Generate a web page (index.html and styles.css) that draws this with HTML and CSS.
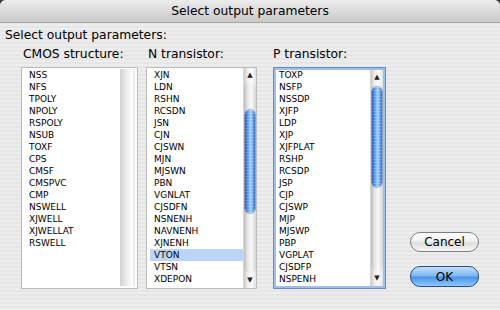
FILE: index.html
```html
<!DOCTYPE html>
<html lang="en">
<head>
  <meta charset="UTF-8">
  <meta name="viewport" content="width=device-width, initial-scale=1.0">
  <title>Select output parameters</title>
  <link rel="stylesheet" href="styles.css">
</head>
<body>
  <div class="window">
    <div class="titlebar">Select output parameters</div>
    <div class="content">
      <div class="prompt">Select output parameters:</div>
      <div class="panels">

        <div class="group group-cmos">
          <div class="group-label">CMOS structure:</div>
          <div class="listbox">
            <ul class="items">
              <li>NSS</li>
              <li>NFS</li>
              <li>TPOLY</li>
              <li>NPOLY</li>
              <li>RSPOLY</li>
              <li>NSUB</li>
              <li>TOXF</li>
              <li>CPS</li>
              <li>CMSF</li>
              <li>CMSPVC</li>
              <li>CMP</li>
              <li>NSWELL</li>
              <li>XJWELL</li>
              <li>XJWELLAT</li>
              <li>RSWELL</li>
            </ul>
            <div class="scroll-off"></div>
          </div>
        </div>

        <div class="group group-n">
          <div class="group-label">N transistor:</div>
          <div class="listbox">
            <ul class="items">
              <li>XJN</li>
              <li>LDN</li>
              <li>RSHN</li>
              <li>RCSDN</li>
              <li>JSN</li>
              <li>CJN</li>
              <li>CJSWN</li>
              <li>MJN</li>
              <li>MJSWN</li>
              <li>PBN</li>
              <li>VGNLAT</li>
              <li>CJSDFN</li>
              <li>NSNENH</li>
              <li>NAVNENH</li>
              <li>XJNENH</li>
              <li class="selected">VTON</li>
              <li>VTSN</li>
              <li>XDEPON</li>
            </ul>
            <div class="scroll">
              <div class="arrow">&#9650;</div>
              <div class="track"><div class="thumb thumb-n"></div></div>
              <div class="arrow">&#9660;</div>
            </div>
          </div>
        </div>

        <div class="group group-p">
          <div class="group-label">P transistor:</div>
          <div class="listbox listbox-focus">
            <ul class="items">
              <li>TOXP</li>
              <li>NSFP</li>
              <li>NSSDP</li>
              <li>XJFP</li>
              <li>LDP</li>
              <li>XJP</li>
              <li>XJFPLAT</li>
              <li>RSHP</li>
              <li>RCSDP</li>
              <li>JSP</li>
              <li>CJP</li>
              <li>CJSWP</li>
              <li>MJP</li>
              <li>MJSWP</li>
              <li>PBP</li>
              <li>VGPLAT</li>
              <li>CJSDFP</li>
              <li>NSPENH</li>
            </ul>
            <div class="scroll">
              <div class="arrow">&#9650;</div>
              <div class="track"><div class="thumb thumb-p"></div></div>
              <div class="arrow">&#9660;</div>
            </div>
          </div>
        </div>

        <div class="buttons">
          <button class="btn">Cancel</button>
          <button class="btn btn-default">OK</button>
        </div>

      </div>
    </div>
  </div>
</body>
</html>
```

FILE: styles.css
```css
html, body {
  margin: 0;
  padding: 0;
}
body {
  background-color: #3a3a3a;
  font-family: "DejaVu Sans", sans-serif;
  color: #000;
}
.window {
  width: 500px;
  height: 310px;
  border-radius: 6px 6px 0 0;
  overflow: hidden;
  background: repeating-linear-gradient(to bottom, #ededed 0 2px, #e6e6e6 2px 4px);
}
.titlebar {
  height: 23px;
  line-height: 22px;
  box-sizing: border-box;
  text-align: center;
  font-size: 12.3px;
  background: linear-gradient(#ececec, #c9c9c9);
  border-bottom: 1px solid #a8a8a8;
}
.content {
  padding-top: 5px;
}
.prompt {
  padding-left: 5px;
  font-size: 12.3px;
  line-height: 15px;
}
.panels {
  display: flex;
  margin: 4px 0 0 21px;
}
.group-label {
  font-size: 12.3px;
  line-height: 15px;
  padding-left: 2px;
  margin-bottom: 5px;
  white-space: nowrap;
}
.group-cmos {
  width: 117px;
  margin-right: 8px;
}
.group-n {
  width: 111px;
  margin-right: 16px;
}
.group-p {
  width: 113px;
}
.group-p .group-label {
  padding-left: 0;
}
.listbox {
  height: 222px;
  box-sizing: border-box;
  border: 1px solid #bcbcbc;
  background-color: #fff;
  display: flex;
}
.listbox-focus {
  border-color: #5f8fd2;
  box-shadow: inset 0 0 0 2px #9fbfea;
}
.items {
  flex: 1;
  list-style: none;
  margin: 0;
  padding: 1px 0 0 3px;
  font-size: 9px;
  overflow: hidden;
}
.listbox-focus .items {
  padding-left: 1px;
}
.items li {
  line-height: 12px;
  padding-left: 4px;
  white-space: nowrap;
}
.items li.selected {
  background-color: #bcd5f6;
}
.scroll-off {
  width: 15px;
  margin: 1px 2px 2px 0;
  background: linear-gradient(to right, #d2d2d2, #ececec 45%, #fdfdfd 80%, #e2e2e2);
}
.scroll {
  width: 12px;
  display: flex;
  flex-direction: column;
  background: linear-gradient(to right, #cbcbcb, #eeeeee 30%, #fcfcfc 60%, #e4e4e4);
  border-left: 1px solid #d6d6d6;
}
.listbox-focus .scroll {
  margin: 2px 2px 2px 0;
}
.arrow {
  height: 15px;
  line-height: 15px;
  font-size: 7px;
  text-align: center;
  color: #222;
}
.track {
  flex: 1;
  border-radius: 6px;
  background: linear-gradient(to right, #bdbdbd, #e6e6e6 30%, #fafafa 60%, #d4d4d4);
}
.thumb {
  margin: 0 1px;
  border-radius: 6px;
  background:
    repeating-linear-gradient(to bottom, rgba(255,255,255,0.18) 0 1px, rgba(255,255,255,0) 1px 3px),
    linear-gradient(to right, #2059b9, #4a8be6 22%, #8cc3fa 48%, #a9d4fe 58%, #5b9cec 82%, #2b63c2);
  box-shadow: 0 0 0 1px rgba(30, 60, 120, 0.35);
}
.thumb-n {
  margin-top: 27px;
  height: 103px;
}
.thumb-p {
  margin-top: 2px;
  height: 100px;
}
.buttons {
  width: 69px;
  margin-left: 24px;
  padding-bottom: 2px;
  display: flex;
  flex-direction: column;
  justify-content: flex-end;
  gap: 14px;
}
.btn {
  height: 20px;
  padding: 0;
  border-radius: 10px;
  border: 1px solid #7d7d7d;
  font-family: "DejaVu Sans", sans-serif;
  font-size: 12px;
  color: #000;
  background: linear-gradient(#fdfdfd, #f1f1f1 45%, #dedede 55%, #f6f6f6);
}
.btn-default {
  height: 21px;
  border-color: #2b4f8c;
  background: linear-gradient(#c3e0fd, #7fb7f4 45%, #4d94ec 55%, #8ccafd);
}
```
